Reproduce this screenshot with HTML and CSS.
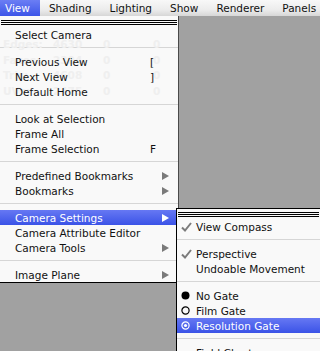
FILE: index.html
```html
<!DOCTYPE html>
<html lang="en">
<head>
    <meta charset="UTF-8">
    <meta name="viewport" content="width=device-width, initial-scale=1.0">
    <title>View menu</title>
    <link rel="stylesheet" href="styles.css">
</head>
<body>
<div class="menubar">
    <span class="title active">View</span>
    <span class="title">Shading</span>
    <span class="title">Lighting</span>
    <span class="title">Show</span>
    <span class="title">Renderer</span>
    <span class="title">Panels</span>
</div>

<div class="menu main-menu">
    <!-- heads-up display showing through the menu -->
    <div class="hud">
        <div class="hud-row"><span>Edges:</span><span>4630</span><span>0</span><span>0</span></div>
        <div class="hud-row"><span>Faces:</span><span>2304</span><span>0</span><span>0</span></div>
        <div class="hud-row"><span>Tris:</span><span>4608</span><span>0</span><span>0</span></div>
        <div class="hud-row"><span>UVs:</span><span>2475</span><span>0</span><span>0</span></div>
    </div>
    <div class="tearoff"></div>
    <div class="item"><span class="label">Select Camera</span></div>
    <div class="sep"></div>
    <div class="item"><span class="label">Previous View</span><span class="key">[</span></div>
    <div class="item"><span class="label">Next View</span><span class="key">]</span></div>
    <div class="item"><span class="label">Default Home</span></div>
    <div class="sep"></div>
    <div class="item"><span class="label">Look at Selection</span></div>
    <div class="item"><span class="label">Frame All</span></div>
    <div class="item"><span class="label">Frame Selection</span><span class="key">F</span></div>
    <div class="sep"></div>
    <div class="item"><span class="label">Predefined Bookmarks</span><span class="arrow"></span></div>
    <div class="item"><span class="label">Bookmarks</span><span class="arrow"></span></div>
    <div class="sep"></div>
    <div class="item selected"><span class="label">Camera Settings</span><span class="arrow"></span></div>
    <div class="item"><span class="label">Camera Attribute Editor</span></div>
    <div class="item"><span class="label">Camera Tools</span><span class="arrow"></span></div>
    <div class="sep"></div>
    <div class="item"><span class="label">Image Plane</span><span class="arrow"></span></div>
</div>

<div class="menu sub-menu">
    <div class="tearoff"></div>
    <div class="item">
        <span class="mark"><svg width="11" height="10" viewBox="0 0 11 10"><path d="M1 5.5 L4 8.5 L10 1" fill="none" stroke="#7b7b7b" stroke-width="2"/></svg></span>
        <span class="label">View Compass</span>
    </div>
    <div class="sep"></div>
    <div class="item">
        <span class="mark"><svg width="11" height="10" viewBox="0 0 11 10"><path d="M1 5.5 L4 8.5 L10 1" fill="none" stroke="#7b7b7b" stroke-width="2"/></svg></span>
        <span class="label">Perspective</span>
    </div>
    <div class="item"><span class="mark"></span><span class="label">Undoable Movement</span></div>
    <div class="sep"></div>
    <div class="item">
        <span class="mark"><svg width="9" height="9" viewBox="0 0 9 9"><circle cx="4.5" cy="4.5" r="4" fill="#000"/></svg></span>
        <span class="label">No Gate</span>
    </div>
    <div class="item">
        <span class="mark"><svg width="9" height="9" viewBox="0 0 9 9"><circle cx="4.5" cy="4.5" r="3.6" fill="none" stroke="#000" stroke-width="1.2"/></svg></span>
        <span class="label">Film Gate</span>
    </div>
    <div class="item selected">
        <span class="mark"><svg width="9" height="9" viewBox="0 0 9 9"><circle cx="4.5" cy="4.5" r="3.6" fill="none" stroke="#fff" stroke-width="1.2"/><circle cx="4.5" cy="4.5" r="1.6" fill="#fff"/></svg></span>
        <span class="label">Resolution Gate</span>
    </div>
    <div class="sep"></div>
    <div class="item"><span class="mark"></span><span class="label">Field Chart</span></div>
</div>
</body>
</html>
```

FILE: styles.css
```css
body {
    margin: 0;
    width: 320px;
    height: 351px;
    overflow: hidden;
    background-color: #a1a1a1;
    font-family: "DejaVu Sans", sans-serif;
    font-size: 10.5px;
    color: #111;
}

.menubar {
    display: flex;
    height: 16px;
    align-items: center;
    background: linear-gradient(#f8f8f8, #ececec 60%, #d6d6d6);
}

.title {
    height: 16px;
    line-height: 16px;
    padding: 0 9px;
}

.title.active {
    padding: 0 10px 0 5px;
    color: #fff;
    background: linear-gradient(#6b7ef4, #3c55e8);
}

.menu {
    position: absolute;
    background-color: #f9f9f9;
}

.main-menu {
    top: 16px;
    left: 0;
    width: 178px;
    padding-top: 4px;
    border-right: 1px solid #4a4a4a;
    border-bottom: 1px solid #000;
}

.sub-menu {
    top: 208px;
    left: 176px;
    right: 0;
    height: 200px;
    padding-top: 3px;
    border-left: 1px solid #000;
    border-top: 1px solid #000;
}

.tearoff {
    height: 5px;
    margin: 0 1px 2px 1px;
    background: repeating-linear-gradient(#000 0, #000 1px, transparent 1px, transparent 2px);
}

.item {
    position: relative;
    display: flex;
    align-items: center;
    height: 15px;
    padding: 0 7px 0 15px;
}

.item .label {
    flex: 1;
    white-space: nowrap;
}

.item .key {
    width: 21px;
}

.arrow {
    width: 0;
    height: 0;
    margin-right: 2px;
    border-left: 7px solid #7a7a7a;
    border-top: 4px solid transparent;
    border-bottom: 4px solid transparent;
}

.item.selected {
    color: #fff;
    background: linear-gradient(#6678f3, #3b53e7);
}

.item.selected .arrow {
    border-left-color: #fff;
}

.sep {
    height: 1px;
    margin: 5px 0 6px 0;
    background-color: #d6d6d6;
}

.sub-menu .item {
    padding-left: 2px;
}

.mark {
    display: flex;
    align-items: center;
    width: 17px;
    padding-left: 2px;
    box-sizing: border-box;
}

.hud {
    position: absolute;
    top: 21px;
    left: 3px;
    font-weight: bold;
    color: #efefef;
}

.hud-row {
    display: flex;
    height: 15.7px;
    line-height: 15.7px;
}

.hud-row span {
    width: 50px;
}
```
